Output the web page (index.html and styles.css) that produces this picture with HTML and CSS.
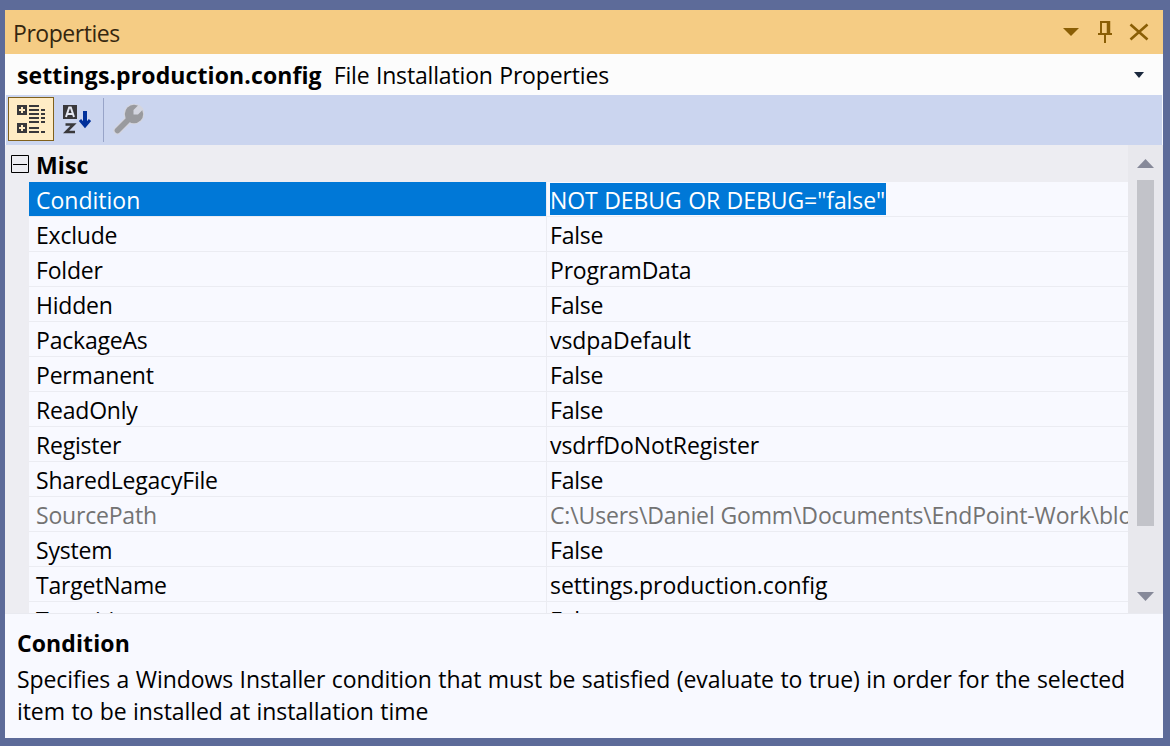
FILE: index.html
```html
<!DOCTYPE html>
<html lang="en">
<head>
<meta charset="utf-8">
<title>Properties</title>
<link rel="stylesheet" href="styles.css">
</head>
<body>
<main class="panel">
  <header class="titlebar">
    <span class="title">Properties</span>
    <svg class="title-icons" width="100" height="44" viewBox="0 0 100 44">
      <path d="M7 18h16l-8 8z" fill="#8a5e05"/>
      <path d="M44 12h10M45 11v13M42 24h14M49 24v9" stroke="#8a5e05" stroke-width="2" fill="none"/>
      <path d="M52.500 11v13" stroke="#8a5e05" stroke-width="3.500"/>
      <path d="M74.500 14.500l17 15M91.500 14.500l-17 15" stroke="#8a5e05" stroke-width="2.600"/>
    </svg>
  </header>
  <section class="selector">
    <b class="object-name">settings.production.config</b>
    <span class="object-type">File Installation Properties</span>
    <svg class="caret" width="10" height="6" viewBox="0 0 10 6"><path d="M0 0h10l-5 6z" fill="#1b293e"/></svg>
  </section>
  <nav class="toolbar">
    <button class="tool active" aria-label="Categorized">
      <svg width="28" height="28" viewBox="0 0 28 28">
        <path d="M0 0h10v10H0zM0 18h10v10H0z" fill="#39383b"/>
        <path d="M2 5h6M5 2v6M2 23h6M5 20v6" stroke="#ffebc4" stroke-width="2"/>
        <path d="M12 1h10M12 5h10M12 9h10M12 13h10M12 17h10M12 23h10M12 27h10M24 5h4M24 9h4M24 13h4M24 17h4M24 27h4" stroke="#39383b" stroke-width="1.800"/>
      </svg>
    </button>
    <button class="tool" aria-label="Alphabetical">
      <svg width="29" height="29" viewBox="0 0 29 29">
        <path d="M0 0h14v14H0z" fill="#39383b"/>
        <path d="M3 12L6.200 2.500h1.600L11 12M4.500 9h5" fill="none" stroke="#e5e8f2" stroke-width="2"/>
        <path d="M2.500 19.500h8L3 27h9" fill="none" stroke="#39383b" stroke-width="2.600"/>
        <path d="M22 6v15" stroke="#00309b" stroke-width="4"/>
        <path d="M17 15l5 6 5-6" fill="none" stroke="#00309b" stroke-width="3"/>
      </svg>
    </button>
    <span class="divider"></span>
    <button class="tool wrench" aria-label="Property Pages">
      <svg width="32" height="32" viewBox="0 0 32 32">
        <path d="M19 14L5.500 27.500" stroke="#d3d5df" stroke-width="8" stroke-linecap="round"/>
        <circle cx="22" cy="11" r="10.300" fill="#d3d5df"/>
        <path d="M19 14L5.500 27.500" stroke="#999a9e" stroke-width="5.600" stroke-linecap="round"/>
        <circle cx="22" cy="11" r="9.200" fill="#999a9e"/>
        <path d="M27 1.500L21.500 7v4.500h4.500l5.500-5.500z" fill="#d3d5df"/>
      </svg>
    </button>
  </nav>
  <section class="grid-area">
    <div class="grid">
      <div class="category">
        <svg class="collapse" width="18" height="18" viewBox="0 0 18 18"><path d="M.5.5h17v17H.5zM2 9.500h14" fill="none" stroke="#000"/></svg>
        <b>Misc</b>
      </div>
      <dl class="rows">
        <div class="row selected"><dt>Condition</dt><dd><mark>NOT DEBUG OR DEBUG="false"</mark></dd></div>
        <div class="row"><dt>Exclude</dt><dd>False</dd></div>
        <div class="row"><dt>Folder</dt><dd>ProgramData</dd></div>
        <div class="row"><dt>Hidden</dt><dd>False</dd></div>
        <div class="row"><dt>PackageAs</dt><dd class="identifier">vsdpaDefault</dd></div>
        <div class="row"><dt>Permanent</dt><dd>False</dd></div>
        <div class="row"><dt>ReadOnly</dt><dd>False</dd></div>
        <div class="row"><dt>Register</dt><dd class="identifier">vsdrfDoNotRegister</dd></div>
        <div class="row"><dt>SharedLegacyFile</dt><dd>False</dd></div>
        <div class="row readonly"><dt>SourcePath</dt><dd class="path">C:\Users\Daniel Gomm\Documents\EndPoint-Work\blog</dd></div>
        <div class="row"><dt>System</dt><dd>False</dd></div>
        <div class="row"><dt>TargetName</dt><dd class="identifier">settings.production.config</dd></div>
        <div class="row last"><dt>Transitive</dt><dd>False</dd></div>
      </dl>
    </div>
    <aside class="scrollbar">
      <svg width="17" height="9" viewBox="0 0 17 9"><path d="M0 9l8.500-9L17 9z" fill="#868999"/></svg>
      <div class="thumb"></div>
      <svg width="17" height="9" viewBox="0 0 17 9"><path d="M0 0h17L8.500 9z" fill="#868999"/></svg>
    </aside>
  </section>
  <footer class="help">
    <b>Condition</b>
    <p>Specifies a Windows Installer condition that must be satisfied (evaluate to true) in order for the selected<br>item to be installed at installation time</p>
  </footer>
</main>
</body>
</html>
```
FILE: styles.css
```css
* { box-sizing: border-box; }
body {
  margin: 0;
  width: 1170px;
  height: 746px;
  padding: 10px 7px 8px 5px;
  background: #5d6b99;
  font-family: "Open Sans", "Noto Sans", sans-serif;
  font-size: 23px;
  letter-spacing: -0.2px;
  color: #000;
  overflow: hidden;
}
.panel {
  display: flex;
  flex-direction: column;
  width: 1158px;
  height: 728px;
  background: #f8f9ff;
}
.titlebar {
  display: flex;
  justify-content: space-between;
  height: 44px;
  padding: 0 7px 0 8px;
  background: #f5cc84;
  color: #35270f;
  line-height: 47px;
  letter-spacing: -0.45px;
}
.selector {
  display: flex;
  align-items: center;
  height: 41px;
  padding: 1px 19px 0 12px;
  background: #fcfcfc;
  line-height: 41px;
}
.object-name { margin-right: 12px; letter-spacing: 0.11px; }
.object-type { letter-spacing: -0.16px; word-spacing: 0.6px; }
.caret { margin-left: auto; }
.toolbar {
  display: flex;
  align-items: flex-start;
  height: 50px;
  margin: 0 1px;
  padding: 2px;
  background: #cbd5ef;
}
.tool {
  display: flex;
  align-items: center;
  justify-content: center;
  width: 46px;
  height: 44px;
  padding: 0;
  border: 1px solid transparent;
  background: none;
}
.tool.active { border-color: #80601b; background: #ffecc5; }
.divider { width: 1px; height: 44px; margin: 1px 1px 1px 3px; background: #98a4c8; }
.grid-area { display: flex; height: 469px; border-bottom: 1px solid #e9eaf0; }
.grid {
  display: flex;
  flex-direction: column;
  width: 1123px;
  overflow: hidden;
  background: #ededf2;
}
.category {
  display: flex;
  flex: none;
  gap: 7px;
  height: 37px;
  padding: 2px 0 0 6px;
  line-height: 37px;
  letter-spacing: 0.1px;
}
.collapse { margin-top: 8px; }
.rows { margin: 0 0 0 24px; background: #f8f9ff; }
.row {
  display: flex;
  height: 35px;
  border-bottom: 1px solid #ebecf2;
  line-height: 37px;
  white-space: nowrap;
}
.row dt { width: 518px; padding-left: 7px; border-right: 1px solid #ebecf2; }
.row dd { flex: 1; min-width: 0; margin: 0; padding-left: 3px; overflow: hidden; }
.row.last { line-height: 36px; }
.selected dt { background: #0078d7; background-clip: padding-box; color: #fff; letter-spacing: 0; }
.selected dd { padding: 1px 0 0 3px; }
mark {
  display: block;
  width: 336px;
  height: 32px;
  background: #0078d7;
  color: #fff;
  line-height: 35px;
  letter-spacing: -0.07px;
  word-spacing: 0.6px;
}
.identifier { letter-spacing: -0.07px; }
.readonly { color: #737373; }
.path { letter-spacing: -0.13px; }
.scrollbar {
  display: flex;
  flex-direction: column;
  align-items: center;
  width: 35px;
  height: 468px;
  padding: 14px 0 12px;
  background: #e8e8ed;
}
.thumb { width: 17px; height: 346px; margin: 12px 0 auto; background: #c2c3c9; }
.help { padding: 11px 12px; white-space: nowrap; }
.help b { display: block; line-height: 36px; letter-spacing: 0.1px; }
.help p { margin: 2px 0 0; line-height: 32px; letter-spacing: -0.08px; word-spacing: 0.6px; }
```
